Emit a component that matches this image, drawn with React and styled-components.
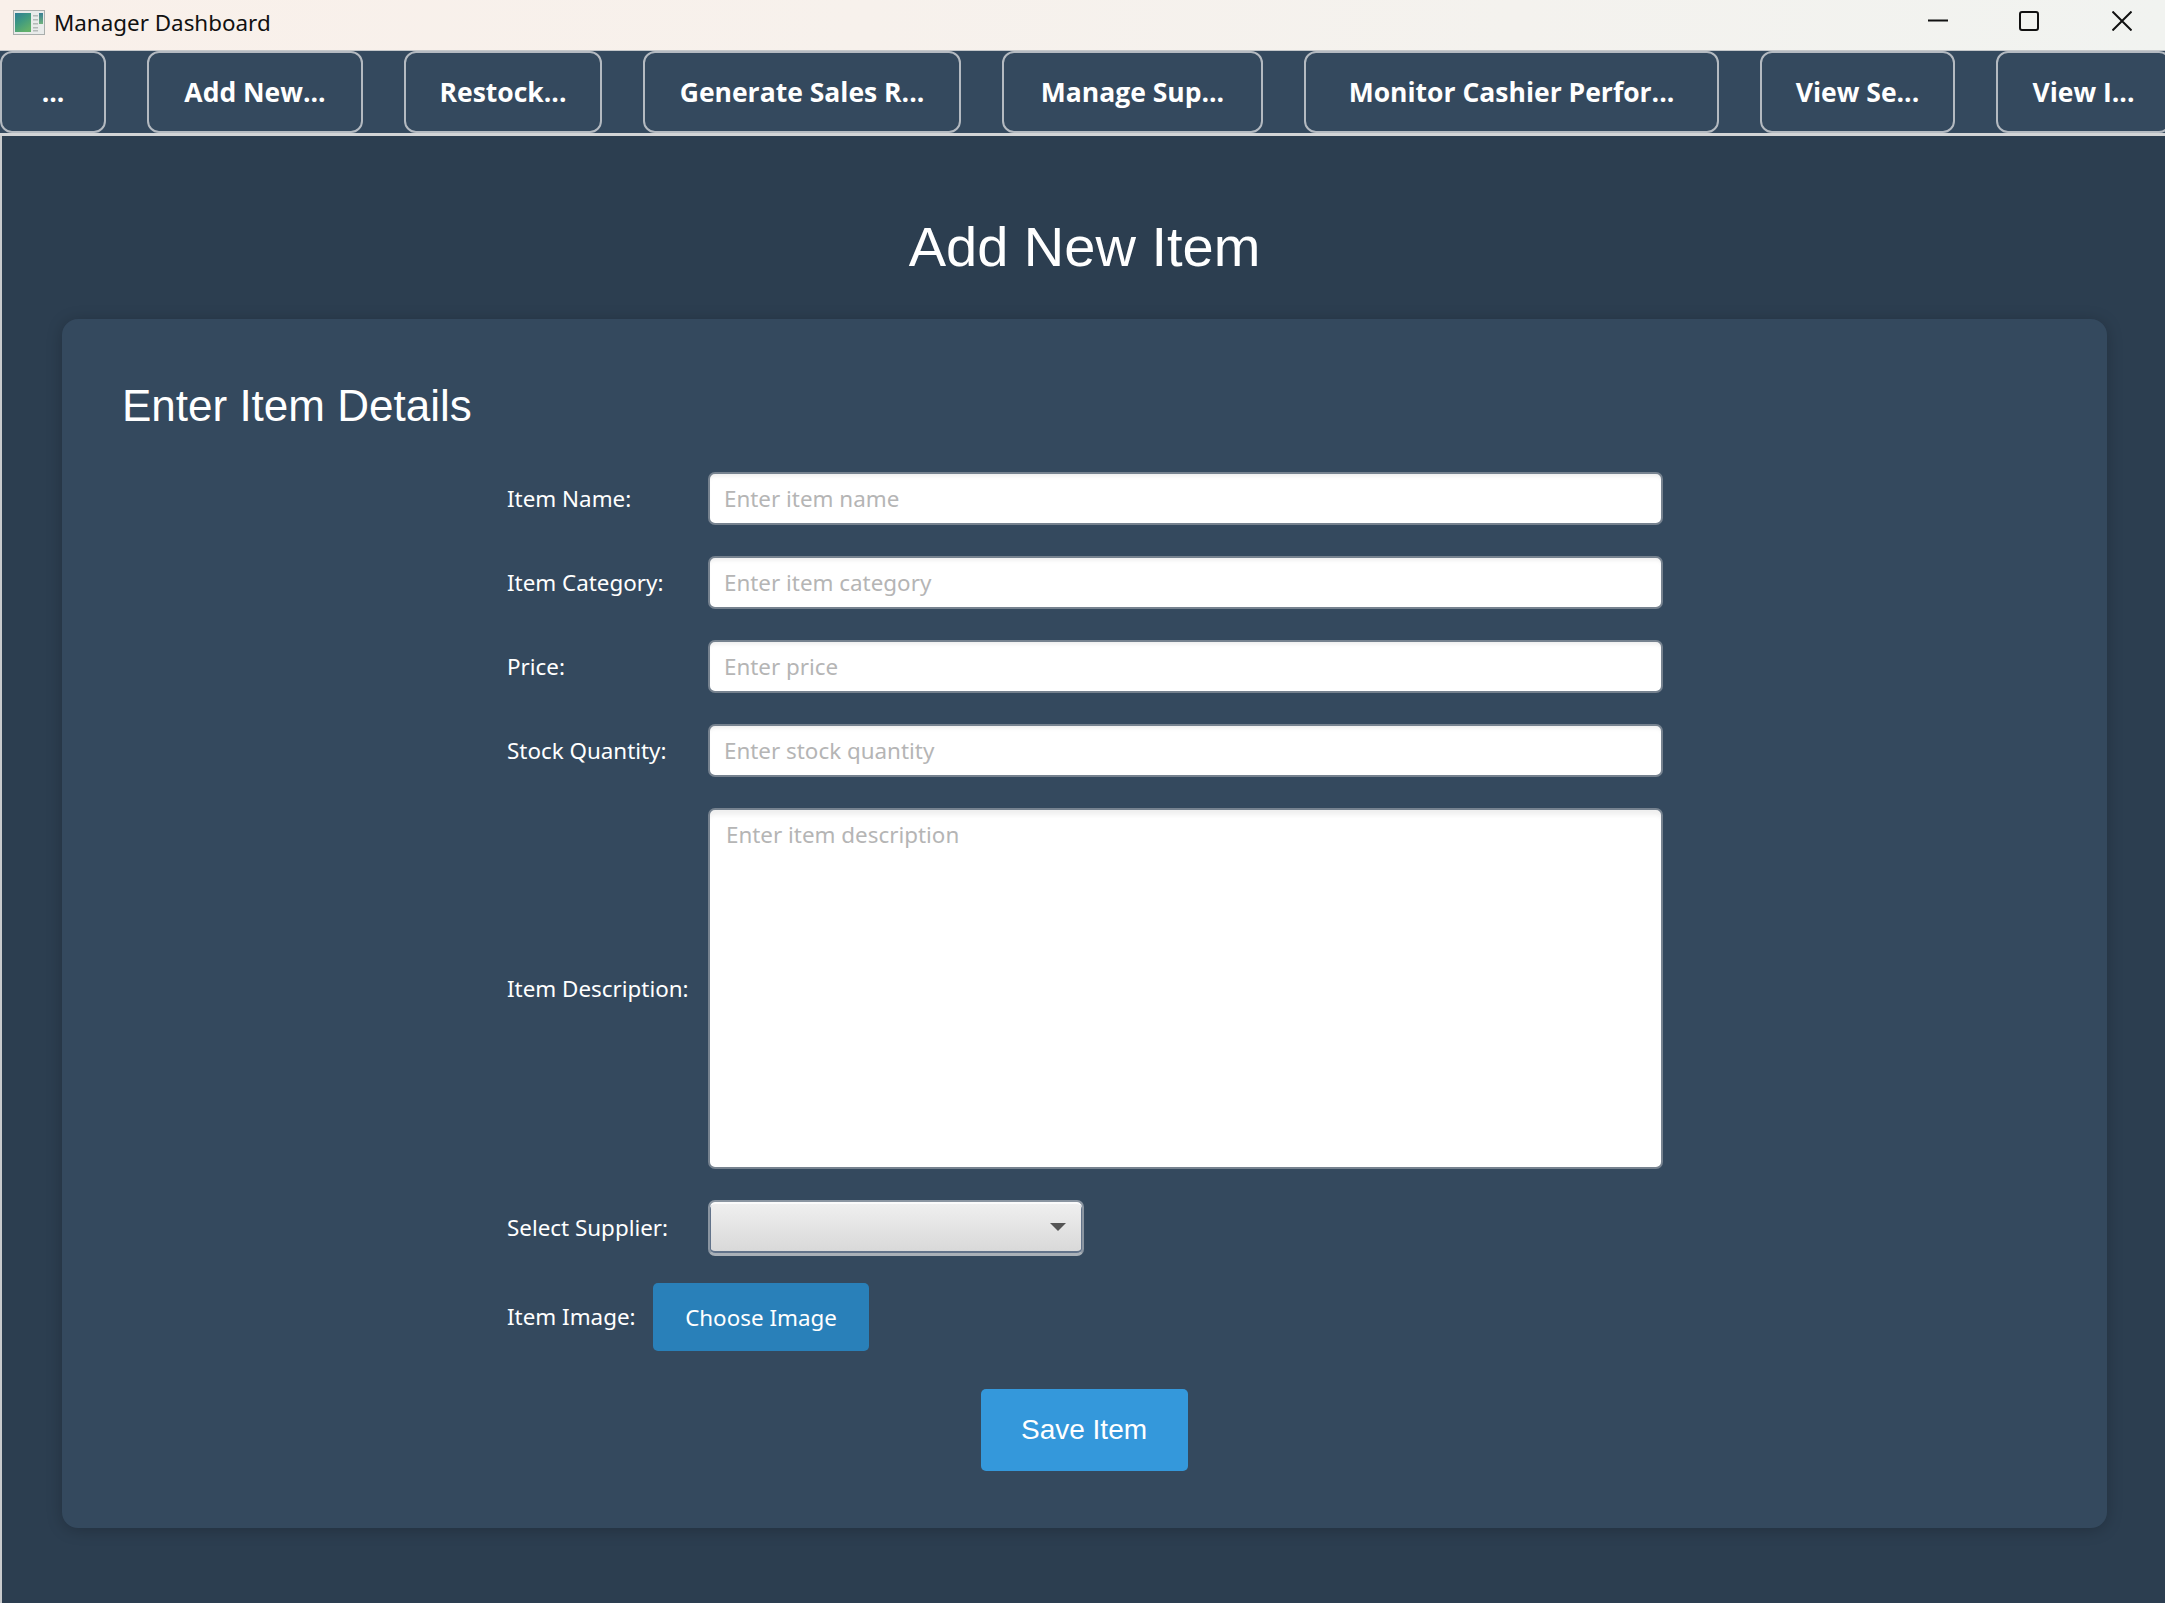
import React from 'react';
import styled, { createGlobalStyle } from 'styled-components';

const GlobalStyle = createGlobalStyle`
  html, body {
    margin: 0;
    padding: 0;
    background: #2c3e50;
  }
  * {
    box-sizing: border-box;
  }
`;

const toolbarItems = [
  { label: '...', width: 106 },
  { label: 'Add New...', width: 216 },
  { label: 'Restock...', width: 198 },
  { label: 'Generate Sales R...', width: 318 },
  { label: 'Manage Sup...', width: 261 },
  { label: 'Monitor Cashier Perfor...', width: 415 },
  { label: 'View Se...', width: 195 },
  { label: 'View I...', width: 175 },
];

const textFields = [
  { label: 'Item Name:', placeholder: 'Enter item name' },
  { label: 'Item Category:', placeholder: 'Enter item category' },
  { label: 'Price:', placeholder: 'Enter price' },
  { label: 'Stock Quantity:', placeholder: 'Enter stock quantity' },
];

const AppIcon = () => (
  <svg width="32" height="25" viewBox="0 0 32 25">
    <defs>
      <linearGradient id="pane" x1="0" y1="0" x2="0.6" y2="1">
        <stop offset="0" stopColor="#2e7d96" />
        <stop offset="0.5" stopColor="#3f9a80" />
        <stop offset="1" stopColor="#62b06a" />
      </linearGradient>
      <linearGradient id="side" x1="0" y1="0" x2="0" y2="1">
        <stop offset="0" stopColor="#3a7f94" />
        <stop offset="1" stopColor="#6fb27c" />
      </linearGradient>
    </defs>
    <rect x="0.5" y="0.5" width="31" height="24" fill="#e9ebea" stroke="#a9aeac" />
    <rect x="2" y="3" width="16" height="19" fill="url(#pane)" />
    <rect x="20" y="5" width="5" height="1.5" fill="#b4bab8" />
    <rect x="20" y="9" width="5" height="1.5" fill="#b4bab8" />
    <rect x="20" y="13" width="5" height="1.5" fill="#b4bab8" />
    <rect x="20" y="17" width="5" height="1.5" fill="#b4bab8" />
    <rect x="20" y="20" width="5" height="1.5" fill="#b4bab8" />
    <rect x="26" y="3" width="4" height="11" fill="url(#side)" />
  </svg>
);

const App = () => {
  return (
    <>
      <GlobalStyle />
      <Window>
        <TitleBar>
          <TitleLeft>
            <AppIcon />
            <WindowTitle>Manager Dashboard</WindowTitle>
          </TitleLeft>
          <WindowControls>
            <ControlIcon viewBox="0 0 20 20">
              <path d="M0 9.5H20" />
            </ControlIcon>
            <ControlIcon viewBox="0 0 20 20">
              <rect x="1" y="1" width="18" height="18" rx="2" />
            </ControlIcon>
            <CloseIcon viewBox="0 0 20 20">
              <path d="M0.5 0.5L19.5 19.5M19.5 0.5L0.5 19.5" />
            </CloseIcon>
          </WindowControls>
        </TitleBar>

        <Toolbar>
          {toolbarItems.map(item => (
            <ToolButton key={item.label} $width={item.width}>{item.label}</ToolButton>
          ))}
        </Toolbar>

        <Main>
          <PageTitle>Add New Item</PageTitle>
          <Card>
            <CardTitle>Enter Item Details</CardTitle>
            <Form>
              {textFields.map(field => (
                <Row key={field.label}>
                  <Label>{field.label}</Label>
                  <Input type="text" placeholder={field.placeholder} />
                </Row>
              ))}
              <Row>
                <Label>Item Description:</Label>
                <TextArea placeholder="Enter item description" />
              </Row>
              <Row>
                <Label>Select Supplier:</Label>
                <Select>
                  <Arrow />
                </Select>
              </Row>
              <ImageRow>
                <ImageLabel>Item Image:</ImageLabel>
                <ChooseButton type="button">Choose Image</ChooseButton>
              </ImageRow>
            </Form>
            <SaveRow>
              <SaveButton type="button">Save Item</SaveButton>
            </SaveRow>
          </Card>
        </Main>
      </Window>
    </>
  );
};

const Window = styled.div`
  width: 2165px;
  height: 1603px;
  display: flex;
  flex-direction: column;
  overflow: hidden;
  background: #2c3e50;
`;

const TitleBar = styled.div`
  height: 50px;
  flex: none;
  display: flex;
  align-items: center;
  justify-content: space-between;
  background: linear-gradient(90deg, #f9f0ea 0%, #f7f1ec 40%, #f1f3f0 100%);
`;

const TitleLeft = styled.div`
  display: flex;
  align-items: center;
  gap: 9px;
  padding-left: 13px;
  margin-top: -5px;
`;

const WindowTitle = styled.span`
  font-family: "Noto Sans", sans-serif;
  font-size: 22.4px;
  color: #111;
`;

const WindowControls = styled.div`
  display: flex;
  align-items: center;
  gap: 71px;
  padding-right: 33px;
  margin-top: -8px;
`;

const ControlIcon = styled.svg`
  width: 20px;
  height: 20px;
  fill: none;
  stroke: #111;
  stroke-width: 2;
`;

const CloseIcon = styled(ControlIcon)`
  margin-left: 2px;
`;

const Toolbar = styled.div`
  height: 86px;
  flex: none;
  display: flex;
  gap: 41px;
  overflow: hidden;
  background: #34495e;
  border-top: 1px solid #c4c7ca;
  border-bottom: 3px solid #d2d4d6;
`;

const ToolButton = styled.button`
  width: ${props => props.$width}px;
  height: 82px;
  flex: none;
  padding: 0;
  background: #34495e;
  border: 2px solid #b4bac1;
  border-radius: 12px;
  color: #fff;
  font-family: "Open Sans", sans-serif;
  font-size: 26.5px;
  font-weight: 700;
`;

const Main = styled.div`
  flex: 1;
  display: flex;
  flex-direction: column;
  align-items: center;
  padding: 0 58px 75px 60px;
  border-left: 2px solid #c9cbcd;
`;

const PageTitle = styled.h1`
  margin: 0;
  height: 183px;
  padding-top: 38px;
  display: flex;
  align-items: center;
  font-family: "Liberation Sans", sans-serif;
  font-size: 56px;
  font-weight: 400;
  color: #fff;
`;

const Card = styled.div`
  width: 100%;
  flex: 1;
  padding: 61px 60px 0 60px;
  border-radius: 16px;
  background: #34495e;
  box-shadow: 0 2px 16px rgba(0, 0, 0, 0.22);
`;

const CardTitle = styled.h2`
  margin: 0;
  height: 52px;
  display: flex;
  align-items: center;
  font-family: "Liberation Sans", sans-serif;
  font-size: 44px;
  font-weight: 400;
  color: #fff;
`;

const Form = styled.div`
  display: flex;
  flex-direction: column;
  gap: 31px;
  width: 1156px;
  margin: 40px 0 0 385px;
`;

const Row = styled.div`
  display: grid;
  grid-template-columns: 201px 955px;
  align-items: center;
`;

const ImageRow = styled.div`
  display: flex;
  align-items: center;
  gap: 20px;
  margin-top: -4px;
`;

const Label = styled.label`
  font-family: "Noto Sans", sans-serif;
  font-size: 22.4px;
  color: #fff;
  white-space: nowrap;
  margin-top: -1px;
`;

const ImageLabel = styled(Label)`
  width: 126px;
`;

const Input = styled.input`
  width: 100%;
  height: 53px;
  padding: 0 14px;
  border: 2px solid #76828f;
  border-radius: 7px;
  outline: none;
  background: #fff;
  box-shadow: inset 0 5px 4px -3px #ececec;
  font-family: "Noto Sans", sans-serif;
  font-size: 22.4px;
  &::placeholder {
    color: #b5b5b5;
  }
`;

const TextArea = styled.textarea`
  width: 100%;
  height: 361px;
  padding: 9px 16px;
  border: 2px solid #76828f;
  border-radius: 7px;
  outline: none;
  resize: none;
  display: block;
  background: #fff;
  box-shadow: inset 0 8px 4px -3px #f0f0f0;
  font-family: "Noto Sans", sans-serif;
  font-size: 22.4px;
  &::placeholder {
    color: #b5b5b5;
  }
`;

const Select = styled.div`
  position: relative;
  width: 376px;
  height: 56px;
  border: 2px solid #8a95a1;
  border-bottom: 3px solid #aab1b8;
  border-radius: 7px;
  background: linear-gradient(180deg, #f0f0f0 0%, #d8d8d8 100%);
  box-shadow: inset 0 2px 0 #fbfbfb, inset 0 -2px 0 #62738a, inset 1px 0 0 #62738a, inset -1px 0 0 #62738a;
`;

const Arrow = styled.span`
  position: absolute;
  right: 16px;
  top: 21px;
  width: 0;
  height: 0;
  border-left: 8px solid transparent;
  border-right: 8px solid transparent;
  border-top: 8px solid #555;
`;

const ChooseButton = styled.button`
  width: 216px;
  height: 68px;
  border: none;
  border-radius: 5px;
  background: #2980b9;
  color: #fff;
  font-family: "Noto Sans", sans-serif;
  font-size: 22.4px;
`;

const SaveRow = styled.div`
  display: flex;
  justify-content: center;
  margin-top: 38px;
`;

const SaveButton = styled.button`
  width: 207px;
  height: 82px;
  margin-left: -1px;
  border: none;
  border-radius: 5px;
  background: #3498db;
  color: #fff;
  font-family: "Liberation Sans", sans-serif;
  font-size: 28px;
`;

export default App;
